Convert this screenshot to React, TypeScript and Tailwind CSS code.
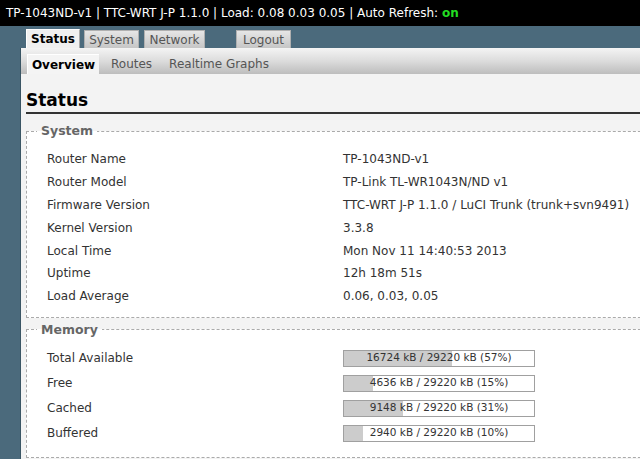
import React from 'react';

const font = { fontFamily: '"DejaVu Sans", Verdana, sans-serif' };

const systemRows: [string, string][] = [
  ['Router Name', 'TP-1043ND-v1'],
  ['Router Model', 'TP-Link TL-WR1043N/ND v1'],
  ['Firmware Version', 'TTC-WRT J-P 1.1.0 / LuCI Trunk (trunk+svn9491)'],
  ['Kernel Version', '3.3.8'],
  ['Local Time', 'Mon Nov 11 14:40:53 2013'],
  ['Uptime', '12h 18m 51s'],
  ['Load Average', '0.06, 0.03, 0.05'],
];

const memoryRows: [string, number][] = [
  ['Total Available', 16724],
  ['Free', 4636],
  ['Cached', 9148],
  ['Buffered', 2940],
];

const TOTAL = 29220;

function MainTab({ label, width, active }: { label: string; width: string; active?: boolean }) {
  return (
    <div
      className={`${width} flex items-center justify-center text-[12px] border border-b-0 ${
        active
          ? 'h-[19px] bg-[#f0f0f0] border-t-white border-l-white border-r-[#aaa] font-bold text-black'
          : 'h-[18px] bg-gradient-to-b from-[#e6e6e6] to-[#c6c6c6] border-[#b0b0b0] text-[#555]'
      }`}
    >
      {label}
    </div>
  );
}

function MemBar({ used }: { used: number }) {
  const pct = Math.floor((used / TOTAL) * 100);
  return (
    <div className="relative w-[192px] h-[17px] border border-[#a0a0a0] bg-white">
      <div className="absolute left-0 top-0 bottom-0 bg-[#cccccc]" style={{ width: `${pct}%` }} />
      <div className="relative h-full flex items-center justify-center text-[10.5px] text-[#333]">
        {used} kB / {TOTAL} kB ({pct}%)
      </div>
    </div>
  );
}

export default function App() {
  return (
    <div className="w-[640px] h-[459px] overflow-hidden bg-[#4b6a7c]" style={font}>
      {/* header bar */}
      <div className="h-[26px] bg-black text-white text-[12px] flex items-center px-[6px] whitespace-nowrap">
        TP-1043ND-v1 | TTC-WRT J-P 1.1.0 | Load: 0.08 0.03 0.05 | Auto Refresh:&nbsp;
        <span className="text-[#22dd22] font-bold">on</span>
      </div>

      {/* main tabs */}
      <div className="h-[22px] flex items-end pl-[26px]">
        <MainTab label="Status" width="w-[54px]" active />
        <div className="w-[4px]" />
        <MainTab label="System" width="w-[55px]" />
        <div className="w-[5px]" />
        <MainTab label="Network" width="w-[61px]" />
        <div className="w-[31px]" />
        <MainTab label="Logout" width="w-[55px]" />
      </div>

      <div className="ml-[20px] w-[640px] border-l border-[#3a5564]">
        {/* sub menu */}
        <div className="h-[26px] bg-gradient-to-b from-[#f4f4f4] via-[#dcdcdc] to-[#bdbdbd] flex items-end pl-[6px] text-[12px]">
          <div className="h-[20px] w-[72px] flex items-center justify-center bg-[#f4f4f4] border-t border-l border-white font-bold text-black">
            Overview
          </div>
          <div className="h-[20px] flex items-center pl-[12px] text-[#555]">Routes</div>
          <div className="h-[20px] flex items-center pl-[17px] text-[#555]">Realtime Graphs</div>
        </div>

        {/* content */}
        <div className="bg-[#f3f3f3] pl-[5px] pt-[16px] h-[400px]">
          <h2 className="text-[17px] font-bold text-black leading-[20px] pb-[2px] border-b-2 border-[#333]">
            Status
          </h2>

          <fieldset className="mt-[10px] border border-dashed border-[#aaa] bg-white w-[650px] pb-[9px]">
            <legend className="ml-[10px] px-[4px] text-[12.5px] font-bold text-[#666] leading-[14px]">System</legend>
            <div className="pt-[10px]">
              {systemRows.map(([k, v]) => (
                <div key={k} className="flex h-[22.8px] items-center text-[12px] text-[#333]">
                  <div className="w-[316px] pl-[20px]">{k}</div>
                  <div className="whitespace-nowrap">{v}</div>
                </div>
              ))}
            </div>
          </fieldset>

          <fieldset className="mt-[5px] border border-dashed border-[#aaa] bg-white w-[650px] pb-[11px]">
            <legend className="ml-[10px] px-[4px] text-[12.5px] font-bold text-[#666] leading-[14px]">Memory</legend>
            <div className="pt-[9px]">
              {memoryRows.map(([k, v]) => (
                <div key={k} className="flex h-[25px] items-center text-[12px] text-[#333]">
                  <div className="w-[316px] pl-[20px]">{k}</div>
                  <MemBar used={v} />
                </div>
              ))}
            </div>
          </fieldset>
        </div>
      </div>
    </div>
  );
}
